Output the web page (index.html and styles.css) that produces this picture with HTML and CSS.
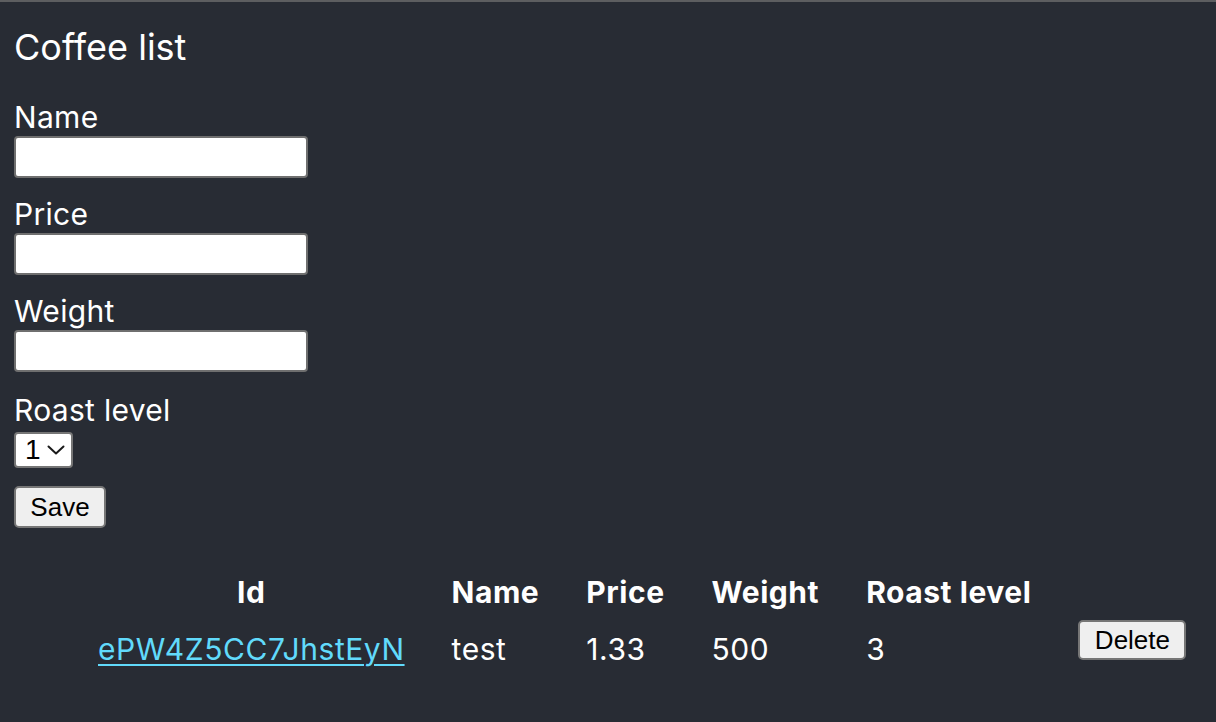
FILE: index.html
```html
<!DOCTYPE html>
<html lang="en">
<head>
<meta charset="utf-8">
<title>Coffee list</title>
<link rel="stylesheet" href="styles.css">
</head>
<body>
<div class="app">
  <h1 class="title">Coffee list</h1>
  <form class="coffee-form">
    <div class="field">
      <label class="field-label" for="name">Name</label>
      <input class="text-input" id="name" type="text">
    </div>
    <div class="field">
      <label class="field-label" for="price">Price</label>
      <input class="text-input" id="price" type="text">
    </div>
    <div class="field">
      <label class="field-label" for="weight">Weight</label>
      <input class="text-input" id="weight" type="text">
    </div>
    <div class="field field-roast">
      <label class="field-label" for="roast">Roast level</label>
      <span class="select-wrap">
        <select class="roast-select" id="roast">
          <option>1</option>
          <option>2</option>
          <option>3</option>
          <option>4</option>
          <option>5</option>
        </select>
        <svg class="select-chevron" width="18" height="10" viewBox="0 0 18 10" aria-hidden="true">
          <path d="M1.5 1.5 L9 8.5 L16.5 1.5" fill="none" stroke="#1a1a1a" stroke-width="2" stroke-linecap="round" stroke-linejoin="round"/>
        </svg>
      </span>
    </div>
    <button class="btn btn-save" type="button">Save</button>
  </form>
  <table class="coffee-table">
    <thead>
      <tr>
        <th>Id</th>
        <th>Name</th>
        <th>Price</th>
        <th>Weight</th>
        <th>Roast level</th>
        <th></th>
      </tr>
    </thead>
    <tbody>
      <tr>
        <td><a class="id-link" href="#">ePW4Z5CC7JhstEyN</a></td>
        <td>test</td>
        <td>1.33</td>
        <td>500</td>
        <td>3</td>
        <td><button class="btn btn-delete" type="button">Delete</button></td>
      </tr>
    </tbody>
  </table>
</div>
</body>
</html>
```
FILE: styles.css
```css
html, body {
  margin: 0;
  padding: 0;
  background: #282c34;
}

.app {
  min-height: 720px;
  border-top: 2px solid #5d5e60;
  padding: 0 14px;
  color: #ffffff;
  font-family: "Inter", "Noto Sans", sans-serif;
}

.title {
  margin: 23px 0 31px;
  font-size: 36px;
  line-height: 44px;
  font-weight: 400;
}

.coffee-form {
  display: flex;
  flex-direction: column;
  align-items: flex-start;
}

.field {
  display: flex;
  flex-direction: column;
  align-items: flex-start;
  margin-bottom: 19px;
}

.field-roast {
  margin-top: 2px;
  margin-bottom: 18px;
}

.field-label {
  font-size: 30px;
  line-height: 34px;
  letter-spacing: 0.3px;
  margin-bottom: 2px;
}

.field-roast .field-label {
  margin-bottom: 5px;
}

.text-input {
  box-sizing: border-box;
  width: 294px;
  height: 42px;
  margin: 0;
  border: 2px solid #6f6f6f;
  border-radius: 4px;
  background: #ffffff;
  font-size: 26px;
  padding: 2px 4px;
}

.select-wrap {
  position: relative;
  display: inline-block;
}

.roast-select {
  display: block;
  box-sizing: border-box;
  width: 59px;
  height: 36px;
  margin: 0;
  border: 2px solid #767676;
  border-radius: 4px;
  background: #ffffff;
  color: #000000;
  font-family: "Liberation Sans", Arial, sans-serif;
  font-size: 28px;
  line-height: 32px;
  padding: 0 0 0 9px;
  -webkit-appearance: none;
  appearance: none;
}

.select-chevron {
  position: absolute;
  left: 33px;
  top: 13px;
  pointer-events: none;
}

.btn {
  box-sizing: border-box;
  margin: 0;
  border: 2px solid #767676;
  border-radius: 5px;
  background: #efefef;
  color: #000000;
  font-family: "Liberation Sans", Arial, sans-serif;
  font-size: 26px;
  line-height: 30px;
}

.btn-save {
  width: 92px;
  height: 42px;
  padding: 4px 0;
}

.btn-delete {
  width: 108px;
  height: 40px;
  padding: 3px 0;
  margin-bottom: 18px;
  display: block;
}

.coffee-table {
  margin: 47px 0 0 60.5px;
  border-collapse: separate;
  border-spacing: 0;
  font-size: 30px;
  line-height: 34px;
  letter-spacing: 0.55px;
  white-space: nowrap;
}

.coffee-table th {
  font-weight: 700;
  text-align: center;
  padding: 0 23.5px 11px;
}

.coffee-table td {
  padding: 0 23.5px;
  text-align: left;
  vertical-align: middle;
}

.id-link {
  color: #61dafb;
  text-decoration: underline;
  text-decoration-thickness: 2px;
  text-underline-offset: 4px;
}
```
